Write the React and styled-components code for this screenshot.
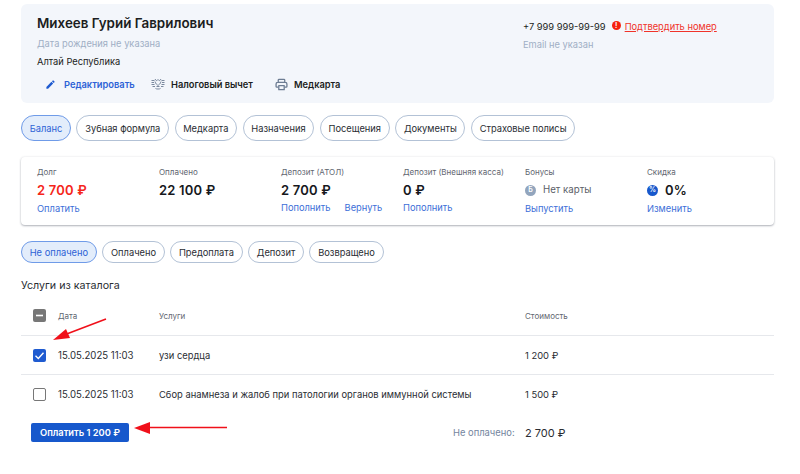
import React from "react";
import styled, { createGlobalStyle } from "styled-components";

const Global = createGlobalStyle`
  html, body { margin: 0; padding: 0; background: #fff; }
  body { font-family: Inter, "Noto Sans", "Liberation Sans", sans-serif; color: #1b1d21; overflow: hidden; }
`;
const Page = styled.div`
  position: relative; width: 800px; height: 474px; box-sizing: border-box;
  padding: 4px 26px 0 21px; display: flex; flex-direction: column; overflow: hidden;
`;
const Header = styled.section`
  height: 99px; box-sizing: border-box; background: #f3f6fb; border-radius: 6px;
  padding: 11px 16px 0; display: flex; justify-content: space-between;
`;
const HeaderLeft = styled.div`display: flex; flex-direction: column;`;
const Name = styled.div`font-size: 13.4px; line-height: 17px; font-weight: 600;`;
const Muted = styled.div`font-size: 9.3px; line-height: 14px; color: #a0afc5; margin-top: ${p => p.$mt || 0}px;`;
const Region = styled.div`font-size: 9.3px; line-height: 14px; color: #1b1d21; margin-top: 4px;`;
const Actions = styled.div`display: flex; align-items: center; margin-top: 7px; height: 16px;`;
const Action = styled.div`
  display: flex; align-items: center; gap: ${p => p.$gap}px; margin-left: ${p => p.$ml}px; width: ${p => p.$w}px;
  font-size: 9.3px; font-weight: 600; color: ${p => p.$blue ? "#2d62d6" : "#1b1d21"};
`;
const HeaderRight = styled.div`width: 235px; padding-top: 4px; box-sizing: border-box; flex: none;`;
const PhoneRow = styled.div`display: flex; align-items: center; height: 14px; font-size: 9.3px;`;
const Confirm = styled.span`color: #f0332a; text-decoration: underline; margin-left: 4px;`;
const Dot = styled.span`
  width: 9px; height: 9px; border-radius: 50%; background: #f5210f; color: #fff; margin-left: 6px; margin-top: -1px;
  font-size: 7px; font-weight: 700; line-height: 9px; text-align: center;
`;
const Pills = styled.nav`display: flex; gap: 5.5px; margin-top: ${p => p.$mt}px;`;
const Pill = styled.div`
  height: ${p => p.$h}px; box-sizing: border-box; padding: 0 7.7px; border-radius: 14px;
  display: flex; align-items: center; font-size: 9.3px; white-space: nowrap;
  border: 1px solid ${p => p.$active ? "#6f9be8" : "#b3c2d6"};
  background: ${p => p.$active ? "#e3edfb" : "#fff"};
  color: ${p => p.$active ? "#2d62d6" : "#2a2d33"};
`;
const Stats = styled.section`
  margin-top: 16px; height: 68px; box-sizing: border-box; padding: 9px 16px 0;
  border-radius: 4px; background: #fff; display: grid; grid-template-columns: repeat(6, 122px);
  box-shadow: 0 1px 2px rgba(40,50,70,.35), 0 0 3px rgba(40,50,70,.08);
`;
const Stat = styled.div`display: flex; flex-direction: column;`;
const StatLabel = styled.div`font-size: 8px; line-height: 12px; color: #5f6670;`;
const StatValue = styled.div`
  font-size: 13px; line-height: 18px; font-weight: 600; margin-top: 3px; height: 18px; letter-spacing: .2px;
  color: ${p => p.$red ? "#f5261a" : "#16181c"}; display: flex; align-items: center;
`;
const Links = styled.div`display: flex; gap: 14px; margin-top: ${p => p.$mt}px;`;
const LinkText = styled.a`font-size: 9.3px; line-height: 14px; color: #3d6fd8;`;
const Badge = styled.span`
  width: 11px; height: 11px; border-radius: 50%; display: inline-flex; align-items: center; justify-content: center;
  background: ${p => p.$blue ? "#1758cc" : "#92a5bd"}; color: #fff; font-size: 7px; font-weight: 600; margin-right: ${p => p.$mr}px;
`;
const NoCard = styled.span`font-size: 9.7px; font-weight: 400; color: #5b6068; letter-spacing: 0;`;
const Title = styled.h2`margin: 15px 0 0; font-size: 10.7px; line-height: 16px; font-weight: 400; color: #2a2d33;`;
const Row = styled.div`
  display: grid; grid-template-columns: 37px 101px 366px 1fr; align-items: center; height: ${p => p.$h}px;
  box-sizing: border-box; border-bottom: ${p => p.$line ? "1px solid #e6e8ec" : "0"};
  font-size: 9.4px; color: #2a2d33;
`;
const HeadRow = styled(Row)`margin-top: 4px; padding-bottom: 2px; font-size: 8px; color: #5f6670;`;
const CheckCell = styled.div`padding-left: 12px;`;
const DateCell = styled.span`font-size: 9.65px;`;
const Box = styled.span`
  display: flex; width: 13px; height: 13px; box-sizing: border-box; border-radius: 2px; align-items: center; justify-content: center;
  background: ${p => p.$bg}; border: ${p => p.$border ? "1.5px solid #777" : "0"};
`;
const Footer = styled.div`display: flex; align-items: center; margin-top: 9px; height: 19px; padding-left: 10px;`;
const PayButton = styled.button`
  width: 98px; height: 19px; padding: 0; border: 0; border-radius: 2px; background: #1758cc; color: #fff;
  font-family: inherit; font-size: 9.3px; font-weight: 600;
`;
const Unpaid = styled.div`margin-left: 324px; font-size: 9.4px; color: #74859e; width: 72px;`;
const Total = styled.div`font-size: 11px; color: #2a2d33;`;
const Arrows = styled.svg`position: absolute; left: 0; top: 0; width: 800px; height: 474px; pointer-events: none;`;

const tabs = ["Баланс", "Зубная формула", "Медкарта", "Назначения", "Посещения", "Документы", "Страховые полисы"];
const filters = ["Не оплачено", "Оплачено", "Предоплата", "Депозит", "Возвращено"];

const Pencil = () => (
  <svg width="11" height="11" viewBox="0 0 24 24" fill="#1f5bd0"><path d="M3 17.25V21h3.75L17.81 9.94l-3.75-3.75L3 17.25zM20.71 7.04a1 1 0 0 0 0-1.41l-2.34-2.34a1 1 0 0 0-1.41 0l-1.83 1.83 3.75 3.75 1.83-1.83z"/></svg>
);
const Tax = () => (
  <svg width="14" height="12" viewBox="0 0 14 12" fill="none" stroke="#6d7d93" strokeWidth=".9">
    <path d="M.5 2.5h3M.5 4.5h2.5M.5 6.5h3M1.5 8.5h2.5M10.5 2.5h3M11 4.5h2.5M10.5 6.5h3M10 8.5h2.5"/>
    <path d="M4 1c1 2 2 2 3 .5C8 3 9 3 10 1M4 3.5c.5 2.5 2 3 3 4 1-1 2.5-1.5 3-4M4.5 10.5c1 .7 4 .7 5 0M5.5 8.5h3"/>
  </svg>
);
const Printer = () => (
  <svg width="13" height="13" viewBox="0 0 24 24" fill="none" stroke="#6d7d93" strokeWidth="2.4" strokeLinejoin="round">
    <path d="M6 8V4a1.5 1.5 0 0 1 1.5-1.5h9A1.5 1.5 0 0 1 18 4v4M6 17H3.5A1.5 1.5 0 0 1 2 15.5V11a3 3 0 0 1 3-3h14a3 3 0 0 1 3 3v4.5a1.5 1.5 0 0 1-1.5 1.5H18"/>
    <path d="M7 14h10v7.5H7z"/>
  </svg>
);

export default function App() {
  return (
    <Page>
      <Global />
      <Header>
        <HeaderLeft>
          <Name>Михеев Гурий Гаврилович</Name>
          <Muted $mt={5}>Дата рождения не указана</Muted>
          <Region>Алтай Республика</Region>
          <Actions>
            <Action $blue $gap={8} $ml={8} $w={106}><Pencil />Редактировать</Action>
            <Action $gap={6} $ml={0} $w={124}><Tax />Налоговый вычет</Action>
            <Action $gap={6} $ml={0}><Printer />Медкарта</Action>
          </Actions>
        </HeaderLeft>
        <HeaderRight>
          <PhoneRow>+7 999 999-99-99<Dot>!</Dot><Confirm>Подтвердить номер</Confirm></PhoneRow>
          <Muted $mt={5}>Email не указан</Muted>
        </HeaderRight>
      </Header>
      <Pills $mt={12}>
        {tabs.map((t, i) => <Pill key={t} $h={26} $active={i === 0}>{t}</Pill>)}
      </Pills>
      <Stats>
        <Stat><StatLabel>Долг</StatLabel><StatValue $red>2 700 ₽</StatValue><Links $mt={3}><LinkText>Оплатить</LinkText></Links></Stat>
        <Stat><StatLabel>Оплачено</StatLabel><StatValue>22 100 ₽</StatValue></Stat>
        <Stat><StatLabel>Депозит (АТОЛ)</StatLabel><StatValue>2 700 ₽</StatValue><Links $mt={2}><LinkText>Пополнить</LinkText><LinkText>Вернуть</LinkText></Links></Stat>
        <Stat><StatLabel>Депозит (Внешняя касса)</StatLabel><StatValue>0 ₽</StatValue><Links $mt={2}><LinkText>Пополнить</LinkText></Links></Stat>
        <Stat><StatLabel>Бонусы</StatLabel><StatValue><Badge $mr={7}>Б</Badge><NoCard>Нет карты</NoCard></StatValue><Links $mt={3}><LinkText>Выпустить</LinkText></Links></Stat>
        <Stat><StatLabel>Скидка</StatLabel><StatValue><Badge $blue $mr={7}>%</Badge>0%</StatValue><Links $mt={3}><LinkText>Изменить</LinkText></Links></Stat>
      </Stats>
      <Pills $mt={16}>
        {filters.map((t, i) => <Pill key={t} $h={22} $active={i === 0}>{t}</Pill>)}
      </Pills>
      <Title>Услуги из каталога</Title>
      <HeadRow $h={38} $line>
        <CheckCell><Box $bg="#777"><svg width="9" height="9" viewBox="0 0 9 9"><path d="M1 4.5h7" stroke="#fff" strokeWidth="1.6"/></svg></Box></CheckCell>
        <span>Дата</span><span>Услуги</span><span>Стоимость</span>
      </HeadRow>
      <Row $h={39} $line>
        <CheckCell><Box $bg="#1f5bd0"><svg width="11" height="11" viewBox="0 0 11 11" fill="none"><path d="M1.5 5.8l2.8 2.6 5.2-5.6" stroke="#fff" strokeWidth="1.4"/></svg></Box></CheckCell>
        <DateCell>15.05.2025 11:03</DateCell><span>узи сердца</span><span>1 200 ₽</span>
      </Row>
      <Row $h={39}>
        <CheckCell><Box $bg="#fff" $border /></CheckCell>
        <DateCell>15.05.2025 11:03</DateCell><span>Сбор анамнеза и жалоб при патологии органов иммунной системы</span><span>1 500 ₽</span>
      </Row>
      <Footer>
        <PayButton>Оплатить 1 200 ₽</PayButton>
        <Unpaid>Не оплачено:</Unpaid>
        <Total>2 700 ₽</Total>
      </Footer>
      <Arrows viewBox="0 0 800 474">
        <path d="M106 319L64 335" stroke="#f0101a" strokeWidth="1.6" fill="none"/>
        <path d="M53 340L66 329L70 338Z" fill="#f0101a"/>
        <path d="M227 427.5H147" stroke="#f0101a" strokeWidth="1.6" fill="none"/>
        <path d="M134 428L150 422V434Z" fill="#f0101a"/>
      </Arrows>
    </Page>
  );
}
